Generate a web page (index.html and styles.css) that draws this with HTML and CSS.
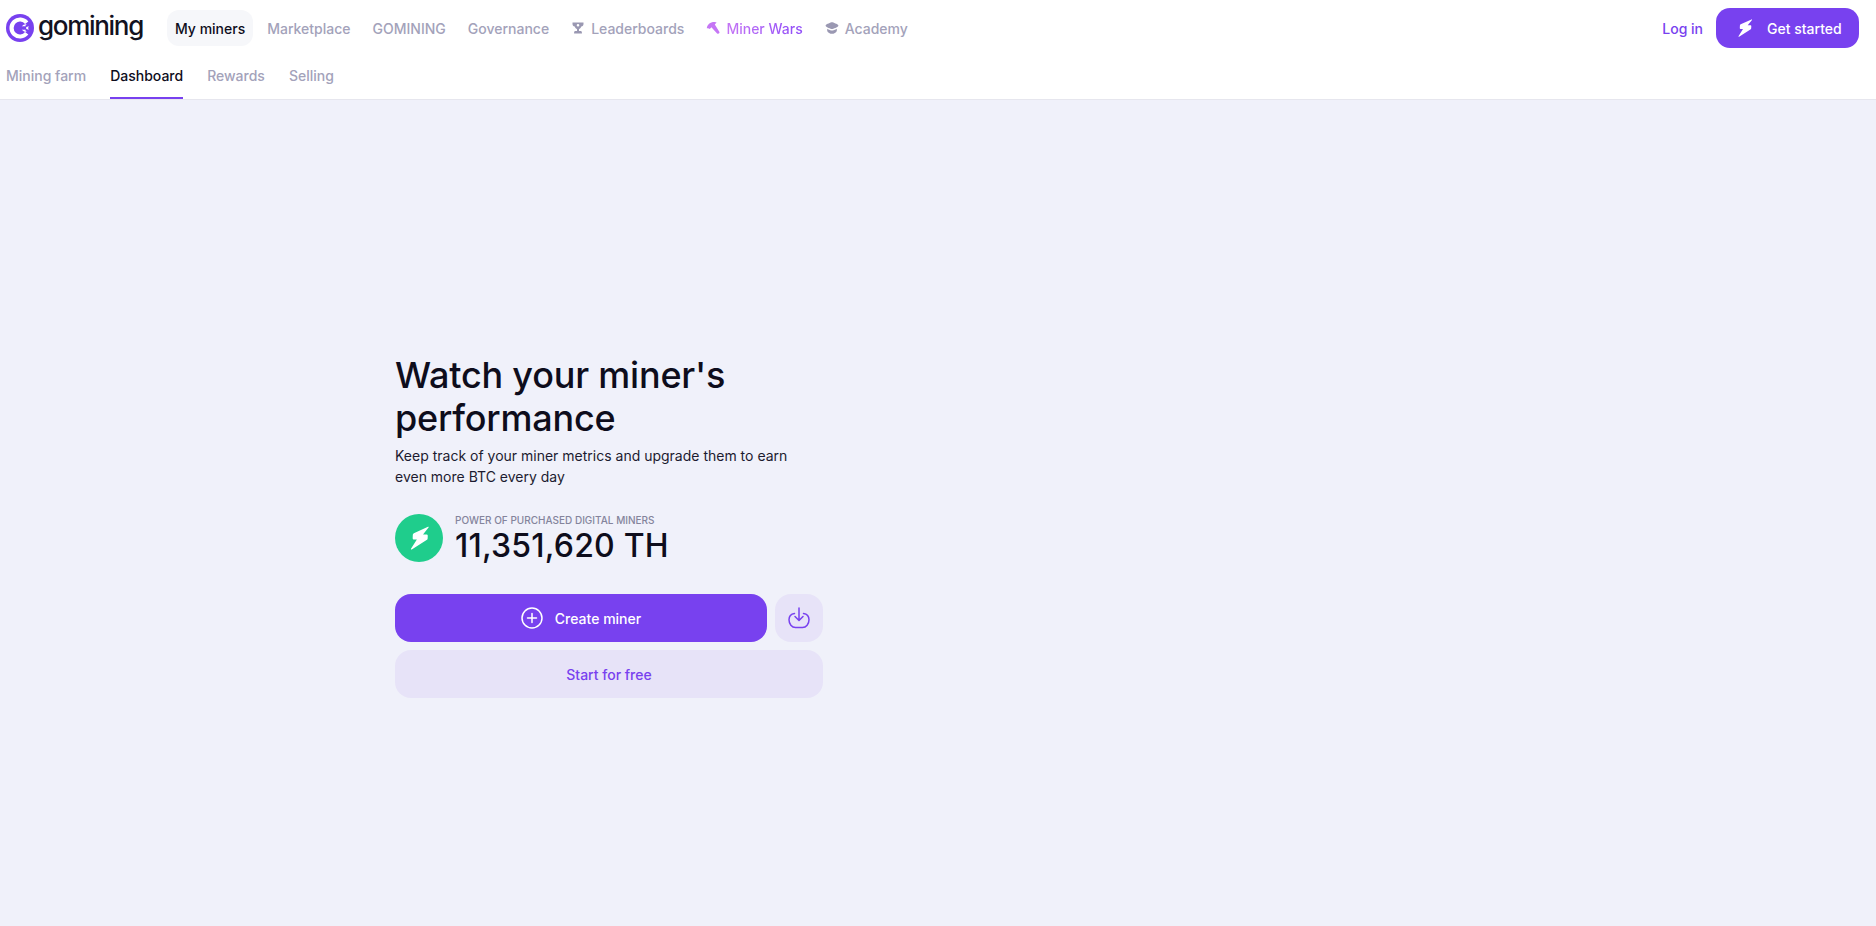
FILE: index.html
```html
<!DOCTYPE html>
<html lang="en">
<head>
<meta charset="utf-8">
<title>GoMining - Dashboard</title>
<link rel="stylesheet" href="styles.css">
</head>
<body>
<header class="header">
  <div class="top-row">
    <a class="logo" href="#">
      <svg class="logo-mark" width="28" height="28" viewBox="0 0 28 28"><circle cx="14" cy="14" r="14" fill="#7841ef"/><path d="M20.700 8.700A8.500 8.500 0 1 0 20.700 19.300" fill="none" stroke="#fff" stroke-width="4.200"/><path d="M15.800 12.600c1.300-1.900 3-2.600 5-2.300-.9.600-1.400 1.200-1.500 2.200-.9-.5-2.200-.5-3.500.1zM15.800 15.400c1.300 1.900 3 2.600 5 2.300-.9-.6-1.400-1.200-1.500-2.200-.9.500-2.200.5-3.500-.1z" fill="#fff"/><path d="M20 13.200c.9-.7 1.800-.9 3-.7-.5.400-.8.800-.9 1.500.1.700.4 1.100.9 1.500-1.200.2-2.100 0-3-.7.500-.5.500-1.100 0-1.600z" fill="#fff"/></svg>
      <span class="logo-text">gomining</span>
    </a>
    <nav class="main-nav">
      <a class="nav-link is-active" href="#">My miners</a>
      <a class="nav-link" href="#">Marketplace</a>
      <a class="nav-link" href="#">GOMINING</a>
      <a class="nav-link" href="#">Governance</a>
      <a class="nav-link" href="#"><svg class="nav-icon" viewBox="0 0 14 14" width="14" height="14"><path fill-rule="evenodd" d="M1.500 1.500h11v1.600c0 1.300-.9 2.300-2.200 2.500C9.700 7 8.900 7.800 8 8.100v2h1.500c.8 0 1.400.6 1.400 1.400v1H3.100v-1c0-.8.600-1.400 1.400-1.400H6v-2c-.9-.3-1.700-1.100-2.300-2.500C2.400 5.400 1.500 4.400 1.500 3.100zM7 3a1.300 1.300 0 1 0 0 2.600A1.300 1.300 0 0 0 7 3z" fill="#9a98b2"/></svg>Leaderboards</a>
      <a class="nav-link nav-wars" href="#"><svg class="nav-icon" viewBox="0 0 14 14" width="14" height="14"><path d="M.8 7.300C1.200 3.600 4.200 1 8.600 1.100c.9 0 1.600.2 2 .5L8.800 3.500l4.500 7.200c.4.600.2 1.100-.2 1.500l-.5.400c-.5.400-1 .3-1.500-.2L5.400 6.300 3.800 8C3.300 7.400 2.100 7 .8 7.300z" fill="#c576f5"/></svg><span class="wars-text">Miner Wars</span></a>
      <a class="nav-link" href="#"><svg class="nav-icon" viewBox="0 0 14 14" width="14" height="14"><path d="M7 1.200c1.200 0 5.700 2 6.300 3 .1.200.1.500 0 .7-.6 1-5.100 3-6.300 3S1.300 5.900.7 4.900a.700.700 0 0 1 0-.7c.6-1 5.100-3 6.300-3z" fill="#9a98b2"/><path d="M2.200 7.800C3.800 8.800 5.900 9.600 7 9.600s3.200-.8 4.800-1.800v2.100c-.8 1.600-2.800 2.900-4.800 2.900s-4-1.300-4.800-2.900z" fill="#9a98b2"/></svg>Academy</a>
    </nav>
    <div class="auth">
      <a class="login" href="#">Log in</a>
      <a class="get-started" href="#">
        <svg class="bolt" viewBox="0 0 16 18" width="16" height="18"><path d="M14.500.4L3.700 5.300c-.5.200-.8.700-.8 1.200l-.1 2.600c0 .6.400 1 1 1h2.200L1.500 17.200c-.2.400.2.700.6.500l11.300-7.100c.5-.3.800-.8.800-1.300l.1-2c0-.6-.4-1-1-1h-2.600L15 .9c.2-.3-.1-.7-.5-.5z" fill="#fff"/></svg>
        Get started
      </a>
    </div>
  </div>
  <nav class="sub-nav">
    <a class="tab" href="#">Mining farm</a>
    <a class="tab is-current" href="#">Dashboard</a>
    <a class="tab" href="#">Rewards</a>
    <a class="tab" href="#">Selling</a>
  </nav>
</header>
<main class="main">
  <section class="promo">
    <h1 class="title">Watch your miner's performance</h1>
    <p class="lead">Keep track of your miner metrics and upgrade them to earn even more BTC every day</p>
    <div class="stat">
      <span class="stat-icon">
        <svg viewBox="0 0 16 18" width="21" height="24"><path d="M14.500.4L3.700 5.300c-.5.200-.8.700-.8 1.200l-.1 2.600c0 .6.400 1 1 1h2.200L1.500 17.200c-.2.400.2.700.6.500l11.300-7.100c.5-.3.800-.8.800-1.300l.1-2c0-.6-.4-1-1-1h-2.600L15 .9c.2-.3-.1-.7-.5-.5z" fill="#fff"/></svg>
      </span>
      <div class="stat-body">
        <div class="stat-label">POWER OF PURCHASED DIGITAL MINERS</div>
        <div class="stat-value">11,351,620 TH</div>
      </div>
    </div>
    <div class="actions">
      <div class="action-row">
        <a class="btn btn-primary" href="#">
          <svg viewBox="0 0 22 22" width="22" height="22" fill="none" stroke="#fff" stroke-width="1.500" stroke-linecap="round"><circle cx="11" cy="11" r="10"/><path d="M11 6.500v9M6.500 11h9"/></svg>
          Create miner
        </a>
        <a class="btn btn-soft btn-square" href="#" aria-label="Download">
          <svg viewBox="0 0 22 22" width="22" height="22" fill="none" stroke="#7841ef" stroke-width="1.500" stroke-linecap="round" stroke-linejoin="round"><path d="M11 1v12M7 9.500l4 4 4-4"/><path d="M6.500 6.500C3.200 7 1 9.300 1 12.800 1 17 3.800 20.500 7.500 20.500h7c3.700 0 6.500-3.500 6.500-7.700 0-3.500-2.200-5.800-5.500-6.300"/></svg>
        </a>
      </div>
      <a class="btn btn-soft" href="#">Start for free</a>
    </div>
  </section>
</main>
</body>
</html>
```
FILE: styles.css
```css
* {
  box-sizing: border-box;
}

html,
body {
  margin: 0;
  height: 100%;
}

body {
  display: flex;
  flex-direction: column;
  height: 926px;
  overflow: hidden;
  background: #f0f1fa;
  font-family: Inter, "Liberation Sans", sans-serif;
  color: #0e0d1c;
}

a {
  text-decoration: none;
  color: inherit;
}

.header {
  height: 100px;
  flex: none;
  background: #fff;
  border-bottom: 1px solid #e6e6ee;
}

.top-row {
  display: flex;
  align-items: center;
  height: 56px;
  padding: 0 17px 0 6px;
}

.logo {
  display: flex;
  align-items: center;
  gap: 4px;
  width: 161px;
}

.logo-mark {
  flex: none;
}

.logo-text {
  font-size: 26px;
  font-weight: 500;
  letter-spacing: -1.3px;
  color: #13121f;
  line-height: 1;
  position: relative;
  top: -2px;
}

.main-nav {
  display: flex;
  align-items: center;
  gap: 6px;
}

.nav-link {
  display: flex;
  align-items: center;
  gap: 6px;
  height: 36px;
  padding: 0 8px;
  border-radius: 12px;
  font-size: 14px;
  font-weight: 500;
  color: #a3a2ba;
}

.nav-link.is-active {
  color: #0e0d1c;
  background: #f6f7fa;
}

.nav-icon {
  flex: none;
}

.wars-text {
  background: linear-gradient(90deg, #c576f5, #8f4cf8);
  -webkit-background-clip: text;
  background-clip: text;
  color: transparent;
}

.auth {
  display: flex;
  align-items: center;
  gap: 13px;
  margin-left: auto;
}

.login {
  font-size: 14px;
  font-weight: 500;
  color: #7841ef;
}

.get-started {
  display: flex;
  align-items: center;
  gap: 14px;
  width: 143px;
  height: 40px;
  padding-left: 21px;
  border-radius: 14px;
  background: #7841ef;
  color: #fff;
  font-size: 14px;
  font-weight: 500;
}

.sub-nav {
  display: flex;
  gap: 24px;
  height: 43px;
  padding-left: 6px;
}

.tab {
  display: flex;
  align-items: center;
  padding-bottom: 2px;
  font-size: 14px;
  font-weight: 500;
  color: #a3a2ba;
  border-bottom: 2px solid transparent;
}

.tab.is-current {
  color: #0e0d1c;
  border-bottom-color: #7841ef;
}

.main {
  flex: 1;
  padding: 254px 0 0 395px;
}

.promo {
  width: 428px;
}

.title {
  margin: 0;
  width: 400px;
  font-size: 36px;
  font-weight: 500;
  line-height: 43px;
  letter-spacing: -0.2px;
  color: #0e0d1c;
}

.lead {
  margin: 5px 0 0;
  width: 420px;
  font-size: 14px;
  line-height: 21px;
  color: #1c1b30;
}

.stat {
  display: flex;
  align-items: center;
  gap: 12px;
  margin-top: 26px;
}

.stat-icon {
  display: flex;
  align-items: center;
  justify-content: center;
  width: 48px;
  height: 48px;
  flex: none;
  border-radius: 50%;
  background: #1fcd8c;
}

.stat-label {
  font-size: 10px;
  font-weight: 500;
  line-height: 14px;
  color: #84849c;
}

.stat-value {
  margin-top: 2px;
  font-size: 32px;
  font-weight: 500;
  line-height: 34px;
  letter-spacing: 0.2px;
  color: #0e0d1c;
}

.actions {
  display: flex;
  flex-direction: column;
  gap: 8px;
  margin-top: 31px;
}

.action-row {
  display: flex;
  gap: 8px;
}

.btn {
  display: flex;
  align-items: center;
  justify-content: center;
  height: 48px;
  border-radius: 16px;
  font-size: 14px;
  font-weight: 500;
}

.btn-primary {
  flex: 1;
  gap: 12px;
  background: #7841ef;
  color: #fff;
}

.btn-soft {
  background: #e7e3f8;
  color: #7841ef;
}

.btn-square {
  width: 48px;
  flex: none;
}
```
